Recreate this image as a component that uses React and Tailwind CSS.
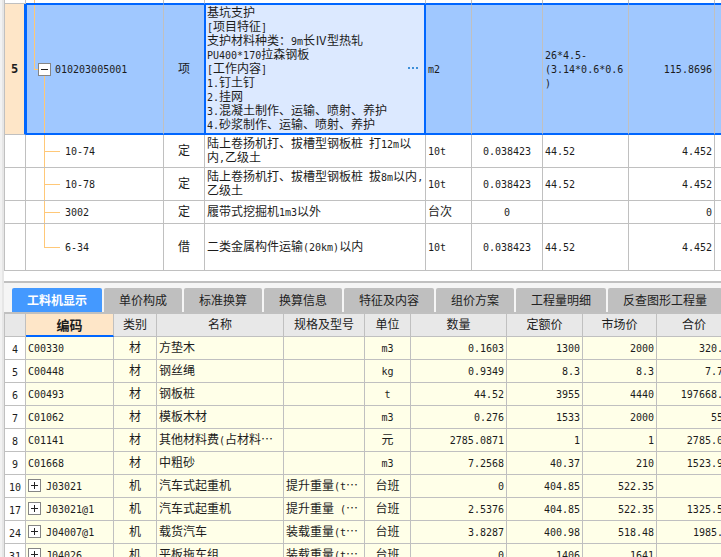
import { useState } from "react";
import clsx from "clsx";

const quotaRows = [
  { code: "10-74", type: "定", name: "陆上卷扬机打、拔槽型钢板桩 打12m以\n内,乙级土", unit: "10t", content: "0.038423", expr: "44.52", qty: "4.452", height: "h-[33px]" },
  { code: "10-78", type: "定", name: "陆上卷扬机打、拔槽型钢板桩 拔8m以内,\n乙级土", unit: "10t", content: "0.038423", expr: "44.52", qty: "4.452", height: "h-[33px]" },
  { code: "3002", type: "定", name: "履带式挖掘机1m3以外", unit: "台次", content: "0", expr: "", qty: "0", height: "h-[23px]" },
  { code: "6-34", type: "借", name: "二类金属构件运输(20km)以内", unit: "10t", content: "0.038423", expr: "44.52", qty: "4.452", height: "h-[47px]" },
];

const itemName = `基坑支护
[项目特征]
支护材料种类：9m长Ⅳ型热轧
PU400*170拉森钢板
[工作内容]
1.钉土钉
2.挂网
3.混凝土制作、运输、喷射、养护
4.砂浆制作、运输、喷射、养护`;

const tabs = ["工料机显示", "单价构成", "标准换算", "换算信息", "特征及内容", "组价方案", "工程量明细", "反查图形工程量"];

const headers = ["类别", "名称", "规格及型号", "单位", "数量", "定额价", "市场价", "合价"];

const resources = [
  { no: 4, code: "C00330", type: "材", name: "方垫木", spec: "", unit: "m3", nums: ["0.1603", "1300", "2000", "320.6"] },
  { no: 5, code: "C00448", type: "材", name: "钢丝绳", spec: "", unit: "kg", nums: ["0.9349", "8.3", "8.3", "7.76"] },
  { no: 6, code: "C00493", type: "材", name: "钢板桩", spec: "", unit: "t", nums: ["44.52", "3955", "4440", "197668.8"] },
  { no: 7, code: "C01062", type: "材", name: "模板木材", spec: "", unit: "m3", nums: ["0.276", "1533", "2000", "552"] },
  { no: 8, code: "C01141", type: "材", name: "其他材料费(占材料…", spec: "", unit: "元", nums: ["2785.0871", "1", "1", "2785.09"] },
  { no: 9, code: "C01668", type: "材", name: "中粗砂", spec: "", unit: "m3", nums: ["7.2568", "40.37", "210", "1523.93"] },
  { no: 10, code: "J03021", type: "机", name: "汽车式起重机", spec: "提升重量(t…", unit: "台班", nums: ["0", "404.85", "522.35", "0"], group: true },
  { no: 17, code: "J03021@1", type: "机", name: "汽车式起重机", spec: "提升重量 (…", unit: "台班", nums: ["2.5376", "404.85", "522.35", "1325.52"], group: true },
  { no: 24, code: "J04007@1", type: "机", name: "载货汽车", spec: "装载重量(t…", unit: "台班", nums: ["3.8287", "400.98", "518.48", "1985.1"], group: true },
  { no: 31, code: "J04026", type: "机", name: "平板拖车组", spec: "装载重量(t…", unit: "台班", nums: ["0", "1406", "1641", "0"], group: true },
];

const cell = "border-r border-b border-[#c0c0c0] px-0.5 pt-0 pb-0.5";
const activeCell = "border-t border-r border-b-2 border-[#0066ff] border-r-[#c0c0c0] px-0.5 pt-0 pb-0.5";

// Half-width runs are set in a narrower mono face so two of them fill one Chinese character
function Mixed({ text }) {
  return String(text)
    .split(/([\x20-\x7e]+)/)
    .filter(Boolean)
    .map((part, i) =>
      /^[\x20-\x7e]/.test(part) ? (
        <span key={i} className="font-['DejaVu_Sans_Mono',monospace] text-[10px] leading-[10px] whitespace-pre">{part}</span>
      ) : (
        part
      )
    );
}

function Expander({ open, label }) {
  return (
    <button aria-label={label} className="flex size-[13px] shrink-0 items-center justify-center border border-[#858585] bg-white">
      <svg width="7" height="7" viewBox="0 0 7 7" shapeRendering="crispEdges" fill="#222">
        <rect x="0" y="3" width="7" height="1" />
        {!open && <rect x="3" y="0" width="1" height="7" />}
      </svg>
    </button>
  );
}

function Branch({ last }) {
  return (
    <div className="flex h-full w-4 shrink-0 flex-col">
      <div className="flex-1 border-b border-l border-[#ffc878]" />
      <div className={clsx("flex-1 border-[#ffc878]", !last && "border-l")} />
    </div>
  );
}

function BillTable() {
  return (
    <table className="w-full min-w-[791px] table-fixed border-separate border-spacing-0">
      <colgroup>
        <col className="w-[22px]" />
        <col className="w-[138px]" />
        <col className="w-[41px]" />
        <col />
        <col className="w-[46px]" />
        <col className="w-[71px]" />
        <col className="w-[86px]" />
        <col className="w-[86px]" />
        <col className="w-20" />
      </colgroup>
      <tbody>
        <tr className="h-1">
          <td className="h-1 border-x border-b border-[#c0c0c0] p-0" />
          <td className="h-1 border-r border-b border-r-[#c0c0c0] border-b-[#0066ff] p-0">
            <div className="ml-2 h-[3px] border-l border-[#ffc878]" />
          </td>
          {[0, 1, 2, 3, 4, 5, 6].map((i) => (
            <td key={i} className="h-1 border-r border-b border-r-[#c0c0c0] border-b-[#0066ff] p-0" />
          ))}
        </tr>
        <tr className="h-[131px] bg-[#a0c8ff]">
          <th className="border-r-2 border-b border-l border-r-[#0066ff] border-b-[#c0c0c0] border-l-[#c0c0c0] bg-[#fee6c8] p-0 font-['DejaVu_Sans_Mono',monospace] text-[12px] font-bold">
            5
          </th>
          <td className="h-[131px] border-t border-r border-b-2 border-l border-[#0066ff] border-r-[#c0c0c0] p-0">
            <div className="flex h-full items-center">
              <div className="ml-[7px] flex h-full w-1 flex-col">
                <div className="flex-1 border-b border-l border-[#ffc878]" />
                <div className="flex-1" />
              </div>
              <div className="flex h-full flex-col items-center">
                <div className="flex-1" />
                <Expander open label="收起 010203005001" />
                <div className="w-px flex-1 bg-[#ffc878]" />
              </div>
              <span className="ml-1 pb-0.5"><Mixed text="010203005001" /></span>
            </div>
          </td>
          <td className="border-t border-r border-b-2 border-[#0066ff] px-0 pt-0 pb-0.5 text-center">项</td>
          <td className="border-t border-r-2 border-b-2 border-l border-[#0066ff] bg-[#dce9ff] pt-0 pr-1.5 pb-0.5 pl-px">
            <div className="flex items-center justify-between">
              <div className="whitespace-pre-line"><Mixed text={itemName} /></div>
              <button aria-label="编辑名称" className="flex gap-0.5">
                <i className="size-0.5 bg-[#3d8fd8]" />
                <i className="size-0.5 bg-[#3d8fd8]" />
                <i className="size-0.5 bg-[#3d8fd8]" />
              </button>
            </div>
          </td>
          <td className={activeCell}><Mixed text="m2" /></td>
          <td className={activeCell} />
          <td className={clsx(activeCell, "whitespace-pre-line")}>
            <Mixed text={"26*4.5-\n(3.14*0.6*0.6\n)"} />
          </td>
          <td className={clsx(activeCell, "text-right")}><Mixed text="115.8696" /></td>
          <td className={activeCell} />
        </tr>
        {quotaRows.map((row, i) => (
          <tr key={row.code}>
            <td className="border-x border-b border-[#c0c0c0] p-0" />
            <td className={clsx("border-r border-b border-[#c0c0c0] py-0 pr-0 pl-[18px]", row.height)}>
              <div className="flex h-full items-center gap-[5px]">
                <Branch last={i === quotaRows.length - 1} />
                <span className="pb-0.5"><Mixed text={row.code} /></span>
              </div>
            </td>
            <td className={clsx(cell, "text-center")}>{row.type}</td>
            <td className={clsx(cell, "whitespace-pre")}><Mixed text={row.name} /></td>
            <td className={cell}><Mixed text={row.unit} /></td>
            <td className={clsx(cell, "text-center")}><Mixed text={row.content} /></td>
            <td className={cell}><Mixed text={row.expr} /></td>
            <td className={clsx(cell, "text-right")}><Mixed text={row.qty} /></td>
            <td className={cell} />
          </tr>
        ))}
      </tbody>
    </table>
  );
}

function ResourceTable() {
  return (
    <table className="w-full min-w-[728px] table-fixed border-separate border-spacing-0">
      <colgroup>
        <col className="w-[22px]" />
        <col className="w-[88px]" />
        <col className="w-[43px]" />
        <col />
        <col className="w-[81px]" />
        <col className="w-[46px]" />
        <col className="w-24" />
        <col className="w-[76px]" />
        <col className="w-[74px]" />
        <col className="w-[75px]" />
      </colgroup>
      <thead>
        <tr className="bg-[#e8e8e8]">
          <td className="h-[23px] border-x border-b border-[#c0c0c0] p-0" />
          <th className="border-r border-b-2 border-r-[#c0c0c0] border-b-[#0066ff] bg-[#fee6c8] p-0 text-[13px] font-bold">编码</th>
          {headers.map((h) => (
            <th key={h} className={clsx(cell, "font-normal")}>{h}</th>
          ))}
        </tr>
      </thead>
      <tbody>
        {resources.map((r) => (
          <tr key={r.no} className="bg-[#ffffe8]">
            <td className="h-[23px] border-x border-b border-[#c0c0c0] bg-white p-0 text-center"><Mixed text={r.no} /></td>
            <td className={cell}>
              <div className="flex items-center gap-[5px]">
                {r.group && <Expander label={`展开 ${r.code}`} />}
                <span><Mixed text={r.code} /></span>
              </div>
            </td>
            <td className={clsx(cell, "text-center")}>{r.type}</td>
            <td className={clsx(cell, "whitespace-nowrap")}><Mixed text={r.name} /></td>
            <td className={clsx(cell, "whitespace-nowrap")}><Mixed text={r.spec} /></td>
            <td className={clsx(cell, "text-center")}><Mixed text={r.unit} /></td>
            {r.nums.map((n, i) => (
              <td key={i} className={clsx(cell, "text-right")}><Mixed text={n} /></td>
            ))}
          </tr>
        ))}
      </tbody>
    </table>
  );
}

export default function App() {
  const [active, setActive] = useState(0);

  return (
    <div lang="zh-CN" className="flex h-screen overflow-hidden bg-white font-['Noto_Sans_CJK_SC',sans-serif] text-[12px] leading-[14px] text-[#1c1c1c]">
      {/* Splitter */}
      <div className="w-1 shrink-0 border-r-2 border-[#e6e6e6] bg-[#f2f2f2]" />

      <main className="min-w-0 flex-1 overflow-hidden">
        <section className="border-b-2 border-[#c0c0c0] pb-2.5">
          <BillTable />
        </section>

        <div role="tablist" className="flex gap-0.5 border-b-2 border-[#c0c0c0] bg-[#f5f5f5] pt-[5px] pl-2">
          {tabs.map((tab, i) => (
            <button
              key={tab}
              role="tab"
              aria-selected={active === i}
              onClick={() => setActive(i)}
              className={clsx(
                "h-6 shrink-0 rounded-t-xs px-[15px] whitespace-nowrap",
                active === i ? "bg-[#4499ff] font-bold text-white" : "bg-[#bfbfbf] text-[#222]"
              )}
            >
              {tab}
            </button>
          ))}
        </div>

        <ResourceTable />
      </main>
    </div>
  );
}
